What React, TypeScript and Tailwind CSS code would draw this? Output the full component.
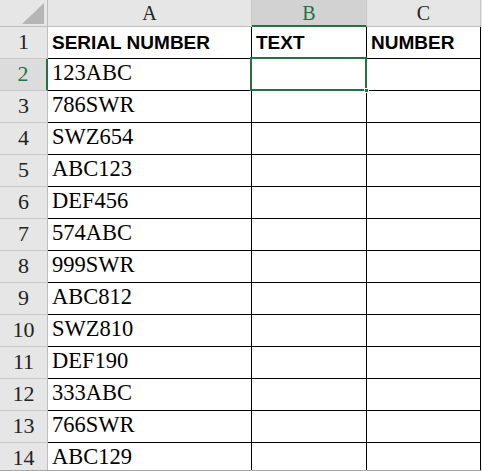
const rows: string[] = [
  'SERIAL NUMBER',
  '123ABC',
  '786SWR',
  'SWZ654',
  'ABC123',
  'DEF456',
  '574ABC',
  '999SWR',
  'ABC812',
  'SWZ810',
  'DEF190',
  '333ABC',
  '766SWR',
  'ABC129',
];

const serif = "font-['Liberation_Serif','Times_New_Roman',serif]";
const sans = "font-['Liberation_Sans',Arial,sans-serif]";

function ColHeader({ label, active }: { label: string; active?: boolean }) {
  return (
    <div
      className={`h-[27px] flex items-center justify-center border-r border-[#c8c8c8] ${serif} text-[20px] ${
        active
          ? 'bg-[#d2d2d2] text-[#217346] border-b-2 border-b-[#217346]'
          : 'bg-[#e6e6e6] text-[#222] border-b border-b-[#bdbdbd]'
      }`}
    >
      {label}
    </div>
  );
}

function RowHeader({ n, active }: { n: number; active?: boolean }) {
  return (
    <div
      className={`h-[32px] flex items-end justify-center pb-[5px] border-b border-[#c8c8c8] ${serif} text-[22px] leading-none ${
        active
          ? 'bg-[#dcdcdc] text-[#217346] border-r-2 border-r-[#217346]'
          : 'bg-[#e6e6e6] text-[#222] border-r border-r-[#bdbdbd]'
      }`}
    >
      {n}
    </div>
  );
}

function Cell({ text, bold }: { text?: string; bold?: boolean }) {
  return (
    <div
      className={`h-[32px] flex items-end pl-[4px] border-r border-b border-black leading-none whitespace-nowrap overflow-hidden text-black ${
        bold ? `${sans} font-bold text-[19px] pb-[6px]` : `${serif} text-[22.5px] pb-[6px]`
      }`}
    >
      {text}
    </div>
  );
}

export default function App() {
  return (
    <div className="w-[482px] h-[471px] overflow-hidden bg-white relative">
      <div className="grid grid-cols-[48px_204px_115px_114px_1fr]">
        <div className="h-[27px] bg-[#e6e6e6] border-r border-b border-[#bdbdbd] flex items-end justify-end pr-[3px] pb-[2px]">
          <svg width="22" height="21" viewBox="0 0 22 21">
            <polygon points="22,0 22,21 0,21" fill="#b5b5b5" />
          </svg>
        </div>
        <ColHeader label="A" />
        <ColHeader label="B" active />
        <ColHeader label="C" />
        <div className="h-[27px] bg-[#e6e6e6] border-b border-[#bdbdbd]" />

        {rows.map((r, i) => (
          <div key={i} className="contents">
            <RowHeader n={i + 1} active={i === 1} />
            <Cell text={r} bold={i === 0} />
            <Cell text={i === 0 ? 'TEXT' : ''} bold={i === 0} />
            <Cell text={i === 0 ? 'NUMBER' : ''} bold={i === 0} />
            <div className="h-[32px]" />
          </div>
        ))}
      </div>

      {/* selection box on B2 */}
      <div className="absolute left-[250px] top-[57px] w-[117px] h-[34px] border-2 border-[#217346]" />
      <div className="absolute left-[364px] top-[88px] w-[5px] h-[5px] bg-[#217346] border border-white" />

      <div className="absolute left-0 right-0 bottom-0 h-[1px] bg-[#a6a6a6]" />
    </div>
  );
}
